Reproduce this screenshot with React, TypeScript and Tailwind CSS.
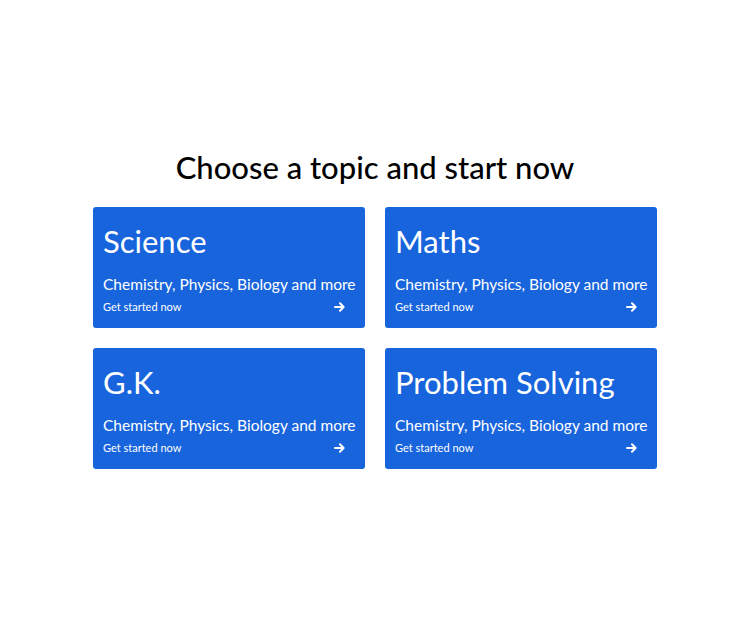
import React from "react";

const topics = ["Science", "Maths", "G.K.", "Problem Solving"];

function Arrow() {
  return (
    <svg width="11" height="10" viewBox="0 0 11 10" fill="none" stroke="white" strokeWidth="2" strokeLinecap="round" strokeLinejoin="round">
      <path d="M1 5h8.5M6 1.2 9.6 5 6 8.8" />
    </svg>
  );
}

export default function App() {
  return (
    <div className="w-[744px] h-[617px] bg-white" style={{ fontFamily: 'Lato, "Noto Sans", sans-serif' }}>
      <div className="pt-[147px] ml-[93px] w-[564px]">
        <h1 className="text-center text-[31px] leading-[40px] text-black font-medium whitespace-nowrap">Choose a topic and start now</h1>
        <div className="mt-[20px] grid grid-cols-2 gap-x-[20px] gap-y-[20px]">
          {topics.map((t) => (
            <div key={t} className="h-[121px] rounded-[3px] bg-[#1864dc] text-white px-[10px] pt-[16px]">
              <div className="text-[31px] leading-[36px] whitespace-nowrap">{t}</div>
              <div className="mt-[15px] text-[15.5px] leading-[20px] whitespace-nowrap">Chemistry, Physics, Biology and more</div>
              <div className="mt-[5px] flex items-center justify-between pr-[10px] h-[16px]">
                <span className="text-[11px] leading-[16px]">Get started now</span>
                <Arrow />
              </div>
            </div>
          ))}
        </div>
      </div>
    </div>
  );
}
